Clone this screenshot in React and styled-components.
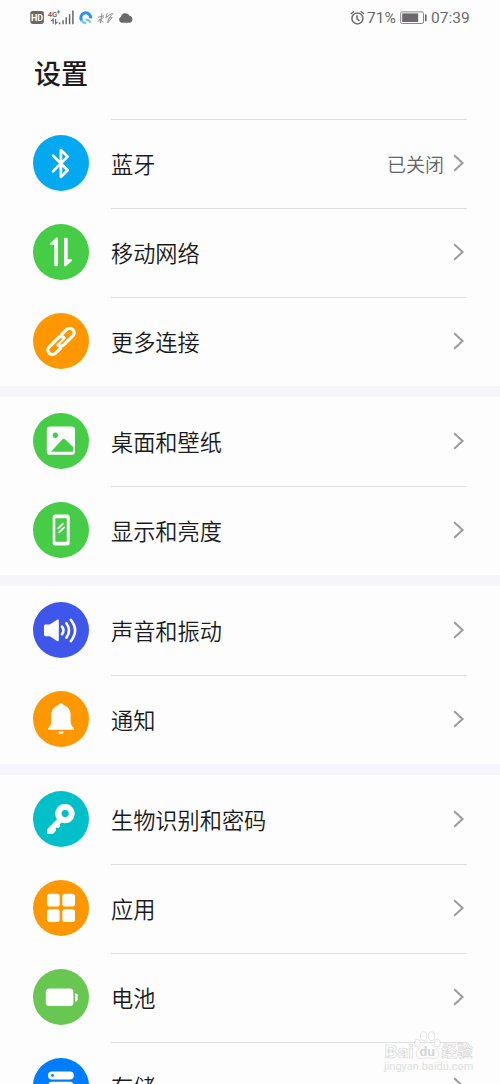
import React from 'react';
import styled, { createGlobalStyle } from 'styled-components';

const BluetoothIcon = () => (
  <Glyph>
    <path
      d='M20 20.6L34.6 35.2L27.9 42V15L34.6 21.6L20 36.4'
      fill='none'
      stroke='#fff'
      strokeWidth='2.7'
      strokeLinecap='round'
      strokeLinejoin='round'
    />
  </Glyph>
);

const NetworkIcon = () => (
  <Glyph>
    <path d='M25 14.4V41a1.2 1.2 0 0 1-1.2 1.2h-1.3a1.2 1.2 0 0 1-1.2-1.2V20.8h-3.2c-1 0-1.3-1-.6-1.7l5.3-5.2c.8-.8 2.2-.5 2.2.7z' />
    <path d='M31 41.4V15a1.2 1.2 0 0 1 1.2-1.2h1.3a1.2 1.2 0 0 1 1.2 1.2V35.2h3.4c1 0 1.3 1 .6 1.7l-5.5 5.2c-.8.8-2.2.5-2.2-.7z' />
  </Glyph>
);

const LinkIcon = () => (
  <Glyph>
    <g
      transform='translate(28 28.4) rotate(-45)'
      fill='none'
      stroke='#fff'
      strokeWidth='3.2'
      strokeLinecap='round'
    >
      <path d='M5.2 -4.5H12.2a4.5 4.5 0 0 1 0 9H-0.2a4.6 4.6 0 0 1 -4.6 -4' />
      <path d='M-5.2 4.5H-12.2a4.5 4.5 0 0 1 0 -9H0.2a4.6 4.6 0 0 1 4.6 4' />
      <path d='M-4.6 0.2H4.6' strokeWidth='2' />
    </g>
  </Glyph>
);

const PictureIcon = () => (
  <Glyph>
    <path
      fillRule='evenodd'
      d='M17.2 13.6h21.4a3.4 3.4 0 0 1 3.4 3.4v21.4a3.4 3.4 0 0 1-3.4 3.4H17.2a3.4 3.4 0 0 1-3.4-3.4V17a3.4 3.4 0 0 1 3.4-3.4zM22.3 19.5a2.8 2.8 0 1 0 .01 0zM18 38.8h21a1.4 1.4 0 0 0 1.4-1.4V34.2L32.2 26.4q-1.5-1.3-3 0z'
    />
  </Glyph>
);

const DisplayIcon = () => (
  <Glyph>
    <path
      fillRule='evenodd'
      d='M22.2 12.4h12a2.5 2.5 0 0 1 2.5 2.5v26a2.5 2.5 0 0 1-2.5 2.5h-12a2.5 2.5 0 0 1-2.5-2.5v-26a2.5 2.5 0 0 1 2.5-2.5zM22.3 16.2v23.5h11.5V16.2z'
    />
    <path
      d='M25.2 26.4L29.8 21.8M26.2 30.4L31.2 25.4'
      stroke='#fff'
      strokeWidth='1.8'
      strokeLinecap='round'
    />
  </Glyph>
);

const SoundIcon = () => (
  <Glyph>
    <path d='M12.4 22.6h4.4L24 17.8q1.8-1 1.8.8v19.6q0 1.8-1.8.8l-7.2-4.8h-4.4q-1.4 0-1.4-1.4V24q0-1.4 1.4-1.4z' />
    <path
      d='M29 24.6q3 3.8 0 7.6M33.4 21.2q5.4 7.2 0 14.4M37.8 17.9q8.6 10.6 0 21.2'
      fill='none'
      stroke='#fff'
      strokeWidth='2.6'
      strokeLinecap='round'
    />
  </Glyph>
);

const BellIcon = () => (
  <Glyph>
    <path d='M28 12.2c1.4 0 2.2.8 2.5 2 4.4 1.2 7.1 4.8 7.1 9.2v6.8c0 3 1.1 4.9 3 6.7.9.9.5 1.9-.7 1.9H16.1c-1.2 0-1.6-1-.7-1.9 1.9-1.8 3-3.7 3-6.7v-6.8c0-4.4 2.7-8 7.1-9.2.3-1.2 1.1-2 2.5-2z' />
    <path d='M25.2 40.4h5.6q-.6 2.6-2.8 2.6t-2.8-2.6z' />
  </Glyph>
);

const KeyIcon = () => (
  <Glyph>
    <path
      fillRule='evenodd'
      d='M32 13a9.6 9.6 0 1 1-3.3 18.6l-2.2 2.2.7 1.5-1.6 1.7-2-.4-.9 1 .4 1.9-2.6 2.9q-.6.7-1.6.7h-3.6q-1.2 0-1.2-1.2v-2.7q0-.9.6-1.5L24 28.2A9.6 9.6 0 0 1 32 13zM32.1 18.8a3.7 3.7 0 1 0 .01 0z'
    />
  </Glyph>
);

const AppsIcon = () => (
  <Glyph>
    <rect x='14' y='13.8' width='12.7' height='12.7' rx='2.8' />
    <rect x='29.3' y='13.8' width='12.7' height='12.7' rx='2.8' />
    <rect x='14' y='29.3' width='12.7' height='12.7' rx='2.8' />
    <rect x='29.3' y='29.3' width='12.7' height='12.7' rx='2.8' />
  </Glyph>
);

const BatteryIcon = () => (
  <Glyph>
    <rect x='12.8' y='19.6' width='27.6' height='17.4' rx='3.6' />
    <path d='M42 24.4h.8a1.9 1.9 0 0 1 1.9 1.9v4.2a1.9 1.9 0 0 1-1.9 1.9H42z' />
  </Glyph>
);

const StorageIcon = () => (
  <Glyph>
    <rect x='15' y='13.4' width='25.8' height='8' rx='4' />
    <rect x='15' y='23.8' width='25.8' height='8' rx='4' />
    <rect x='15' y='34.2' width='25.8' height='8' rx='4' />
    <circle cx='19.5' cy='17.5' r='1.4' fill='#007dff' />
  </Glyph>
);

const groups = [
  [
    { label: '蓝牙', color: '#03a9f0', icon: <BluetoothIcon />, value: '已关闭' },
    { label: '移动网络', color: '#47cc47', icon: <NetworkIcon /> },
    { label: '更多连接', color: '#ff9800', icon: <LinkIcon /> },
  ],
  [
    { label: '桌面和壁纸', color: '#47cc47', icon: <PictureIcon /> },
    { label: '显示和亮度', color: '#47cc47', icon: <DisplayIcon /> },
  ],
  [
    { label: '声音和振动', color: '#3f56ea', icon: <SoundIcon /> },
    { label: '通知', color: '#ff9800', icon: <BellIcon /> },
  ],
  [
    { label: '生物识别和密码', color: '#00bfc9', icon: <KeyIcon /> },
    { label: '应用', color: '#ff9800', icon: <AppsIcon /> },
    { label: '电池', color: '#67c750', icon: <BatteryIcon /> },
    { label: '存储', color: '#007dff', icon: <StorageIcon /> },
  ],
];

const StatusIcons = () => (
  <svg width='104' height='18' viewBox='0 0 104 18'>
    <rect x='0.2' y='2' width='13.8' height='13' rx='2.4' fill='#6b696b' />
    <text x='7.1' y='11.9' fontSize='9' fontWeight='700' fill='#fff' textAnchor='middle'>
      HD
    </text>
    <text x='17.8' y='7.8' fontSize='7.5' fontWeight='600' fill='#666'>
      4G
    </text>
    <path d='M27 2.9h3.2M28.6 1.3v3.2' stroke='#666' strokeWidth='0.9' />
    <path
      d='M23.2 15v-4.8l-2 1.8M25.6 10v4.7l2-1.8'
      fill='none'
      stroke='#666'
      strokeWidth='1.1'
    />
    <path
      d='M29.6 15.2v-1.6M33 15.2v-4M36.2 15.2v-7M39.6 15.2v-10M42.9 15.2V1.5'
      stroke='#6b696b'
      strokeWidth='1.5'
    />
    <path
      d='M51.8 11.6a4.9 4.9 0 1 1 8.8-2.2'
      fill='none'
      stroke='#2a93ee'
      strokeWidth='3'
    />
    <path
      d='M51.4 11q1.4 3 5 3.2M55.8 10.6q2.2-.4 5 3'
      fill='none'
      stroke='#7cc4f6'
      strokeWidth='2.2'
    />
    <path
      d='M68 8.2l6-1.4M72 4.2l-1.6 10M67.4 12.8l6.4-4.6M69 10l4.6 3.4M77.2 4.2l-1.4 4.6 6-4.4M83.2 4l-4 5 3-.6-4.6 5.6 1.6-5.4'
      fill='none'
      stroke='#858585'
      strokeWidth='0.9'
    />
    <path
      d='M91.2 13.8a3.2 3.2 0 0 1-.2-6 4.6 4.6 0 0 1 8.6-1 3.6 3.6 0 0 1 .2 7z'
      fill='#6b696b'
    />
  </svg>
);

const AlarmIcon = () => (
  <svg width='15' height='16' viewBox='0 0 15 16' fill='none' stroke='#6b696b'>
    <circle cx='7.4' cy='8.4' r='5.5' strokeWidth='1.5' />
    <path d='M7 5.2v3.4l2.4 2.4M0.8 4L4 1.3M14 4l-3.2-2.7' strokeWidth='1.5' />
  </svg>
);

const PowerIcon = () => (
  <svg width='28' height='14' viewBox='0 0 28 14'>
    <rect x='0.7' y='0.9' width='22.8' height='11.6' rx='1.6' fill='none' stroke='#858585' />
    <rect x='2.2' y='2.4' width='16' height='8.6' fill='#6b696b' />
    <rect x='25' y='3.4' width='1.6' height='6.8' fill='#6b696b' />
  </svg>
);

const Chevron = () => (
  <svg width='12' height='18' viewBox='0 0 12 18'>
    <path d='M1.2 1.2L9.6 9L1.2 16.8' fill='none' stroke='#9a9a9a' strokeWidth='2' />
  </svg>
);

const App = () => {
  return (
    <Screen>
      <GlobalStyle />
      <StatusBar>
        <StatusIcons />
        <StatusRight>
          <AlarmIcon />
          <Percent>71%</Percent>
          <PowerIcon />
          <Time>07:39</Time>
        </StatusRight>
      </StatusBar>
      <Title>设置</Title>
      {groups.map((rows, index) => (
        <Group key={index}>
          {rows.map(({ label, color, icon, value }, rowIndex) => (
            <Row key={label}>
              <Badge $color={color}>{icon}</Badge>
              <RowBody $line={index === 0 || rowIndex > 0}>
                <Label>{label}</Label>
                {value && <Value>{value}</Value>}
                <Chevron />
              </RowBody>
            </Row>
          ))}
        </Group>
      ))}
      <Watermark>
        <svg width='92' height='30' viewBox='0 0 92 30' overflow='visible'>
          <g fill='#fdfdfd' stroke='#d9d9d9' strokeWidth='0.7'>
            <text
              x='0.5'
              y='28.8'
              fontSize='19'
              fontWeight='700'
              textLength='29'
              lengthAdjust='spacingAndGlyphs'
            >
              Bai
            </text>
            <ellipse cx='33.4' cy='14' rx='3' ry='4' />
            <ellipse cx='39.6' cy='7.2' rx='3.2' ry='4.4' />
            <ellipse cx='47.6' cy='7.2' rx='3.2' ry='4.4' />
            <ellipse cx='53.4' cy='14' rx='3' ry='4' />
            <path d='M43.5 13c4 0 5 4 8.5 6.5s4 8.5-.5 9.8c-3 .7-5-.5-8-.5s-5 1.2-8 .5c-4.5-1.3-4-7.3-.5-9.800s4.500-6.500 8.500-6.500z' />
            <text
              x='57.5'
              y='28'
              fontSize='15.5'
              fontWeight='700'
              textLength='31'
              lengthAdjust='spacingAndGlyphs'
            >
              经验
            </text>
          </g>
          <text
            x='35.5'
            y='27.4'
            fontSize='12.5'
            fontWeight='700'
            fill='#d6d6d6'
            textLength='15.5'
            lengthAdjust='spacingAndGlyphs'
          >
            du
          </text>
        </svg>
        <Url>jingyan.baidu.com</Url>
      </Watermark>
    </Screen>
  );
};

const GlobalStyle = createGlobalStyle`
  * {
    box-sizing: border-box;
  }

  body {
    margin: 0;
    background-color: #f6f5f9;
    font-family: Roboto, 'Noto Sans CJK SC', sans-serif;
  }

  svg {
    display: block;
    flex-shrink: 0;
  }
`;

const Screen = styled.div`
  position: relative;
  width: 500px;
  height: 1084px;
  overflow: hidden;
  background-color: #f6f5f9;
`;

const StatusBar = styled.header`
  display: flex;
  align-items: center;
  justify-content: space-between;
  height: 36px;
  padding: 0 30px;
  background-color: #fdfdfd;
`;

const StatusRight = styled.div`
  display: flex;
  align-items: center;
  color: #6b696b;
  font-size: 15.5px;
`;

const Percent = styled.span`
  width: 35px;
  padding-left: 2px;
`;

const Time = styled.span`
  width: 39px;
  margin-left: 3px;
  white-space: nowrap;
`;

const Title = styled.h1`
  height: 83px;
  margin: 0;
  padding: 19px 34px 0;
  background-color: #fdfdfd;
  color: #1c1c1e;
  font-size: 27px;
  font-weight: 500;
  line-height: 40px;
`;

const Group = styled.section`
  background-color: #fdfdfd;

  & + & {
    margin-top: 11px;
  }
`;

const Row = styled.div`
  display: flex;
  align-items: center;
  gap: 22px;
  height: 89px;
  padding: 0 33px 1px;
`;

const Badge = styled.div`
  flex-shrink: 0;
  width: 56px;
  height: 56px;
  border-radius: 50%;
  background-color: ${({ $color }) => $color};
`;

const Glyph = styled.svg.attrs({ viewBox: '0 0 56 56' })`
  width: 56px;
  height: 56px;
  fill: #fff;
`;

const RowBody = styled.div`
  display: flex;
  flex: 1;
  align-items: center;
  height: 100%;
  padding-right: 2px;
  border-top: 1px solid ${({ $line }) => ($line ? '#e0e0e2' : 'transparent')};
  border-bottom: 1px solid transparent;
`;

const Label = styled.span`
  flex: 1;
  padding-top: 4px;
  color: #1a1a1c;
  font-size: 22.2px;
  font-weight: 350;
  line-height: 32px;
`;

const Value = styled.span`
  margin-right: 9px;
  padding-top: 5px;
  color: #646466;
  font-size: 19px;
  font-weight: 350;
  line-height: 28px;
`;

const Watermark = styled.div`
  position: absolute;
  left: 384px;
  top: 1029px;
`;

const Url = styled.div`
  margin-top: 1px;
  color: #dedede;
  font-size: 11px;
  line-height: 14px;
  white-space: nowrap;
`;

export default App;
